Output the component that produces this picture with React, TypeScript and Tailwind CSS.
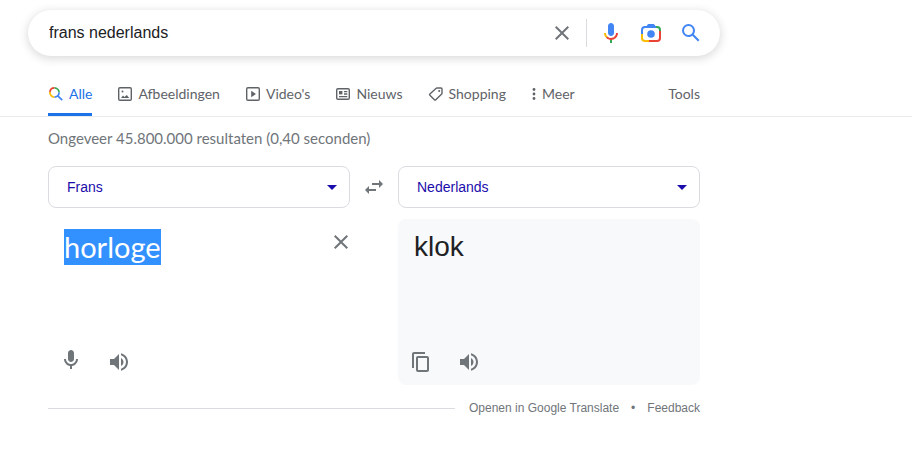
import { useEffect, useRef, useState, type ReactNode } from "react";

const LANGUAGES = ["Frans", "Nederlands", "Engels", "Duits"];

function Icon({ d, className = "h-6 w-6", viewBox = "0 0 24 24" }: { d: string; className?: string; viewBox?: string }) {
  return (
    <svg viewBox={viewBox} className={className} fill="currentColor" aria-hidden="true">
      <path d={d} />
    </svg>
  );
}

const PATHS = {
  close:
    "M19 6.41L17.59 5 12 10.59 6.41 5 5 6.41 10.59 12 5 17.59 6.41 19 12 13.41 17.59 19 19 17.59 13.41 12z",
  search:
    "M20.49 19l-5.73-5.73C15.53 12.2 16 10.91 16 9.5A6.5 6.5 0 1 0 9.5 16c1.41 0 2.7-.47 3.77-1.24L19 20.49 20.49 19zM5 9.5C5 7.01 7.01 5 9.5 5S14 7.01 14 9.5 11.99 14 9.5 14 5 11.99 5 9.5z",
  mic: "M12 14c1.66 0 3-1.34 3-3V5c0-1.66-1.34-3-3-3S9 3.34 9 5v6c0 1.66 1.34 3 3 3zm5-3c0 2.76-2.24 5-5 5s-5-2.24-5-5H5c0 3.53 2.61 6.43 6 6.92V21h2v-3.08c3.39-.49 6-3.39 6-6.92h-2z",
  volume:
    "M3 9v6h4l5 5V4L7 9H3zm13.5 3c0-1.77-1.02-3.29-2.5-4.03v8.05c1.48-.73 2.5-2.25 2.5-4.02zM14 3.23v2.06c2.89.86 5 3.54 5 6.71s-2.11 5.85-5 6.71v2.06c4.01-.91 7-4.49 7-8.77s-2.99-7.86-7-8.77z",
  copy: "M5 2h11v2H5v14H3V4c0-1.1.9-2 2-2zm13 4H9c-1.1 0-2 .9-2 2v12c0 1.1.9 2 2 2h9c1.1 0 2-.9 2-2V8c0-1.1-.9-2-2-2zm0 14H9V8h9v12z",
  swap: "M6.99 11L3 15l3.99 4v-3H14v-2H6.99v-3zM21 9l-3.99-4v3H10v2h7.01v3L21 9z",
  drop: "M7 10l5 5 5-5z",
};

function VoiceIcon() {
  return (
    <svg viewBox="0 0 24 24" className="h-6 w-6" aria-hidden="true">
      <path fill="#4285f4" d="m12 15c1.66 0 3-1.31 3-2.97v-7.02c0-1.66-1.34-3.01-3-3.01s-3 1.34-3 3.01v7.02c0 1.66 1.34 2.97 3 2.97z" />
      <path fill="#34a853" d="m11 18.08h2v3.92h-2z" />
      <path fill="#fbbc05" d="m7.05 16.87c-1.27-1.33-2.05-2.83-2.05-4.87h2c0 1.45.56 2.42 1.47 3.38v.32l-1.15 1.18z" />
      <path fill="#ea4335" d="m12 16.93a4.97 5.25 0 0 1-3.54-1.55l-1.41 1.49c1.26 1.34 3.02 2.13 4.95 2.13 3.87 0 6.99-2.92 6.99-7h-1.99c0 2.92-2.24 4.93-5 4.93z" />
    </svg>
  );
}

function LensIcon() {
  return (
    <svg viewBox="0 0 24 24" className="h-6 w-6" fill="none" strokeWidth="2" aria-hidden="true">
      <path stroke="#34a853" d="M16 6h2a3 3 0 0 1 3 3v2" />
      <path stroke="#ea4335" d="M21 10v7a3 3 0 0 1-3 3h-8" />
      <path stroke="#fbbc04" d="M10 20H6a3 3 0 0 1-3-3v-4" />
      <path stroke="#4285f4" d="M3 13V9a3 3 0 0 1 3-3h11" />
      <path fill="#4285f4" d="M7 6l1.6-2.4c.2-.4.6-.6 1-.6h4.8c.4 0 .8.2 1 .6L17 6z" />
      <circle cx="12" cy="13" r="3.8" fill="#4285f4" />
    </svg>
  );
}

function AllIcon() {
  return (
    <svg viewBox="0 0 16 16" className="h-4 w-4" fill="none" strokeWidth="1.7" aria-hidden="true">
      <path stroke="#ea4335" d="M1.9 6A4.6 4.6 0 0 1 6.5 1.9" />
      <path stroke="#34a853" d="M6.5 1.9A4.6 4.6 0 0 1 11.1 6.5" />
      <path stroke="#fbbc04" d="M1.9 6A4.6 4.6 0 0 0 6.5 11.1" />
      <path stroke="#4285f4" d="M6.5 11.1A4.6 4.6 0 0 0 11.1 6.5M9.8 9.8l4.4 4.4" />
    </svg>
  );
}

function OutlineIcon({ children }: { children: ReactNode }) {
  return (
    <svg viewBox="0 0 16 16" className="h-4 w-4" fill="none" stroke="currentColor" strokeWidth="1.4" aria-hidden="true">
      {children}
    </svg>
  );
}

const TABS: { label: string; icon: ReactNode }[] = [
  {
    label: "Afbeeldingen",
    icon: (
      <OutlineIcon>
        <rect x="1.7" y="1.7" width="12.6" height="12.6" rx="1.2" />
        <path d="M4 12l2-2.6 1.5 1.6L9.8 9l2.4 3z" fill="currentColor" stroke="none" />
        <circle cx="5.5" cy="5.5" r="1" fill="currentColor" stroke="none" />
      </OutlineIcon>
    ),
  },
  {
    label: "Video's",
    icon: (
      <OutlineIcon>
        <rect x="1.7" y="1.7" width="12.6" height="12.6" rx="1.2" />
        <path d="M6.2 4.8v6.4L11 8z" fill="currentColor" stroke="none" />
      </OutlineIcon>
    ),
  },
  {
    label: "Nieuws",
    icon: (
      <OutlineIcon>
        <rect x="1.7" y="2.7" width="12.6" height="10.6" rx="1.2" />
        <path d="M4 5h3.4v3.4H4z" fill="currentColor" stroke="none" />
        <path d="M9 5.6h3.3M9 8h3.3M4 10.6h8.3" />
      </OutlineIcon>
    ),
  },
  {
    label: "Shopping",
    icon: (
      <OutlineIcon>
        <path d="M9 2h4a1 1 0 0 1 1 1v4.2a1 1 0 0 1-.3.7l-5.9 5.8a1 1 0 0 1-1.4 0L1.9 9.3a1 1 0 0 1 0-1.4L8.2 2.3A1 1 0 0 1 9 2z" />
        <circle cx="11.2" cy="4.9" r="1" fill="currentColor" stroke="none" />
      </OutlineIcon>
    ),
  },
];

function SearchBar() {
  const [query, setQuery] = useState("frans nederlands");

  return (
    <form
      role="search"
      onSubmit={(e) => e.preventDefault()}
      className="ml-7 flex h-[46px] max-w-[692px] items-center gap-4 rounded-full bg-white pl-[21px] pr-[17px] shadow-[0_2px_8px_1px_rgba(64,60,67,0.18)]"
    >
      <input
        type="text"
        aria-label="Zoeken"
        value={query}
        onChange={(e) => setQuery(e.target.value)}
        className="min-w-0 flex-1 bg-transparent text-base text-[#202124] outline-none"
      />
      <div className="flex items-center gap-3">
        <button type="button" aria-label="Wissen" onClick={() => setQuery("")} className="text-[#70757a]">
          <Icon d={PATHS.close} />
        </button>
        <span className="h-7 w-px bg-[#dadce0]" />
        <button type="button" aria-label="Gesproken zoekopdracht">
          <VoiceIcon />
        </button>
      </div>
      <button type="button" aria-label="Zoeken op afbeelding">
        <LensIcon />
      </button>
      <button type="submit" aria-label="Google Zoeken" className="text-[#4285f4]">
        <Icon d={PATHS.search} />
      </button>
    </form>
  );
}

function Tabs() {
  return (
    <nav className="mt-[18px] border-b border-[#ebebeb] pl-12 font-[Lato,sans-serif] text-sm text-[#5f6368]">
      <div className="flex h-[42px] max-w-[652px] gap-[25px]">
        <a href="#alle" aria-current="page" className="flex items-center gap-[5px] border-b-[3px] border-[#1a73e8] text-[#1a73e8]">
          <AllIcon />
          Alle
        </a>
        {TABS.map(({ label, icon }) => (
          <a key={label} href="#" className="flex items-center gap-[5px] border-b-[3px] border-transparent">
            {icon}
            {label}
          </a>
        ))}
        <button type="button" className="flex items-center gap-[5px] border-b-[3px] border-transparent">
          <svg viewBox="0 0 6 16" className="h-4 w-1.5" fill="currentColor" aria-hidden="true">
            <circle cx="3" cy="3.5" r="1.4" />
            <circle cx="3" cy="8" r="1.4" />
            <circle cx="3" cy="12.5" r="1.4" />
          </svg>
          Meer
        </button>
        <button type="button" className="ml-auto border-b-[3px] border-transparent">
          Tools
        </button>
      </div>
    </nav>
  );
}

function LanguageSelect({ label, value, onChange }: { label: string; value: string; onChange: (v: string) => void }) {
  return (
    <div className="relative">
      <select
        aria-label={label}
        value={value}
        onChange={(e) => onChange(e.target.value)}
        className="h-[42px] w-full appearance-none rounded-lg border border-[#dadce0] bg-white px-[18px] text-sm text-[#1a0dab]"
      >
        {LANGUAGES.map((lang) => (
          <option key={lang}>{lang}</option>
        ))}
      </select>
      <span className="pointer-events-none absolute inset-y-0 right-1.5 flex items-center text-[#1a0dab]">
        <Icon d={PATHS.drop} />
      </span>
    </div>
  );
}

function Translator() {
  const [from, setFrom] = useState("Frans");
  const [to, setTo] = useState("Nederlands");
  const [text, setText] = useState("horloge");
  const source = useRef<HTMLTextAreaElement>(null);

  useEffect(() => {
    source.current?.focus();
    source.current?.select();
  }, []);

  const swap = () => {
    setFrom(to);
    setTo(from);
  };

  return (
    <section>
      <div className="grid grid-cols-[minmax(0,1fr)_48px_minmax(0,1fr)] gap-y-[11px] text-[#70757a]">
        <LanguageSelect label="Brontaal" value={from} onChange={setFrom} />
        <button type="button" aria-label="Talen omwisselen" onClick={swap} className="flex items-center justify-center">
          <Icon d={PATHS.swap} />
        </button>
        <LanguageSelect label="Doeltaal" value={to} onChange={setTo} />

        <div className="flex min-h-[166px] flex-col justify-between pt-2.5 pb-[11px]">
          <div className="flex items-start">
            <textarea
              ref={source}
              rows={1}
              aria-label="Brontekst"
              spellCheck={false}
              value={text}
              onChange={(e) => setText(e.target.value)}
              className="ml-4 min-w-0 flex-1 resize-none bg-transparent font-[Lato,sans-serif] text-[29px] leading-9 text-[#202124] outline-none selection:bg-[#3390ff] selection:text-white"
            />
            <button type="button" aria-label="Tekst wissen" onClick={() => setText("")} className="pt-1">
              <Icon d={PATHS.close} viewBox="3 3 18 18" className="h-[18px] w-[18px]" />
            </button>
          </div>
          <div className="flex gap-6 pl-[11px]">
            <button type="button" aria-label="Inspreken">
              <Icon d={PATHS.mic} viewBox="0 2 24 24" />
            </button>
            <button type="button" aria-label="Brontekst beluisteren">
              <Icon d={PATHS.volume} />
            </button>
          </div>
        </div>

        <div className="col-start-3 flex flex-col justify-between rounded-lg bg-[#f8f9fa] pt-2.5 pb-[11px]">
          <p className="px-4 text-[28px] leading-9 text-[#202124]">klok</p>
          <div className="flex gap-6 pl-[11px]">
            <button type="button" aria-label="Vertaling kopiëren">
              <Icon d={PATHS.copy} />
            </button>
            <button type="button" aria-label="Vertaling beluisteren">
              <Icon d={PATHS.volume} />
            </button>
          </div>
        </div>
      </div>

      <footer className="mt-[15px] flex items-center text-xs text-[#70757a]">
        <span className="mr-3.5 h-px flex-1 bg-[#dadce0]" />
        <a href="#translate">Openen in Google Translate</a>
        <span className="mx-3">•</span>
        <a href="#feedback">Feedback</a>
      </footer>
    </section>
  );
}

export default function App() {
  return (
    <div className="min-h-screen bg-white pt-2.5 font-['Liberation_Sans',Arial,sans-serif]">
      <SearchBar />
      <Tabs />
      <main className="ml-12 max-w-[652px]">
        <p className="pt-[11px] pb-[18px] font-[Lato,sans-serif] text-[15px] leading-5 text-[#70757a]">
          Ongeveer 45.800.000 resultaten (0,40 seconden)
        </p>
        <Translator />
      </main>
    </div>
  );
}
